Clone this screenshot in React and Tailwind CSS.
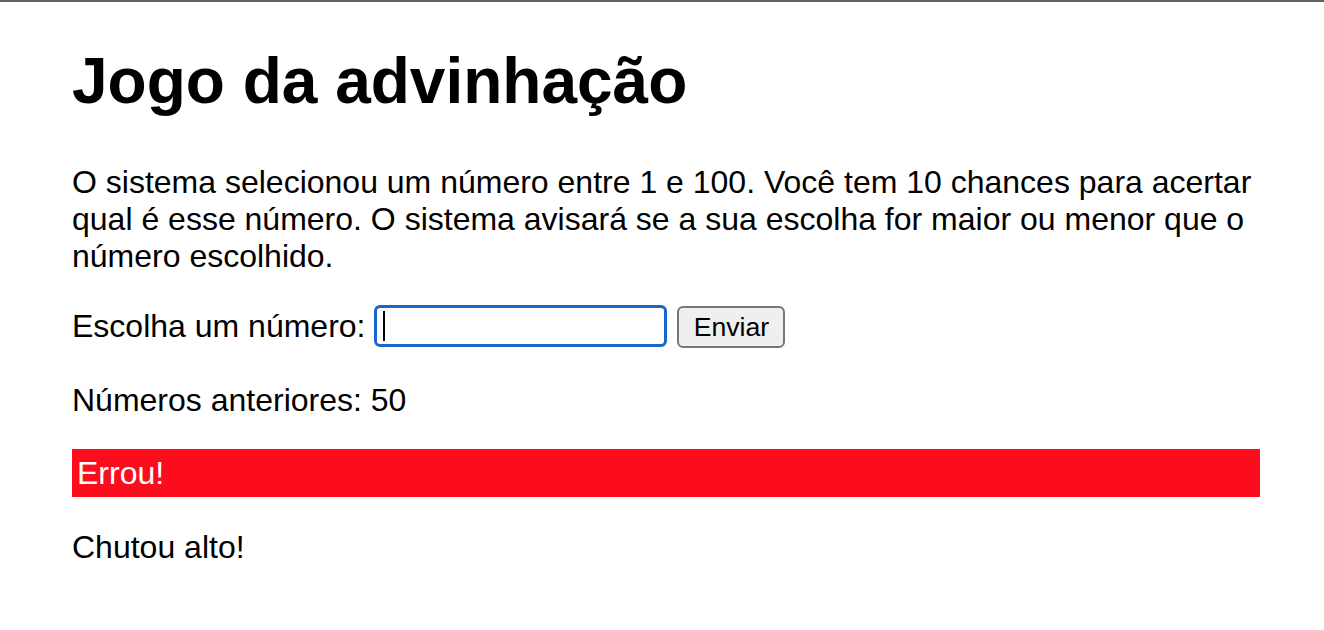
export default function App() {
  return (
    <div className="min-h-[630px] bg-white text-black font-['Liberation_Sans',Arial,Helvetica,sans-serif]">
      <div className="h-[2px] bg-[#616161]" />
      <div className="ml-[72px] w-[1188px] pt-[42px]">
        <h1 className="text-[64px] leading-[74px] font-bold">Jogo da advinhação</h1>
        <p className="mt-[46px] text-[32px] leading-[37px]">
          O sistema selecionou um número entre 1 e 100. Você tem 10 chances para acertar
          <br />
          qual é esse número. O sistema avisará se a sua escolha for maior ou menor que o
          <br />
          número escolhido.
        </p>
        <div className="mt-[29px] flex h-[44px] items-center text-[32px] leading-[37px]">
          <span>Escolha um número:</span>
          <div className="ml-[9px] flex h-[42px] w-[293px] items-center rounded-[6px] border-[3px] border-[#1a66cf] bg-white pl-[6px]">
            <div className="h-[30px] w-[2px] bg-black" />
          </div>
          <button className="ml-[10px] mt-[2px] h-[42px] w-[108px] rounded-[6px] border-2 border-[#767676] bg-[#efefef] text-[26.67px] leading-[30px] text-black">
            Enviar
          </button>
        </div>
        <p className="mt-[34px] text-[32px] leading-[37px]">Números anteriores: 50</p>
        <div className="mt-[30px] h-[48px] bg-[#fc0d1e] px-[5px] text-[32px] leading-[48px] text-white">
          Errou!
        </div>
        <p className="mt-[32px] text-[32px] leading-[37px]">Chutou alto!</p>
      </div>
    </div>
  );
}
